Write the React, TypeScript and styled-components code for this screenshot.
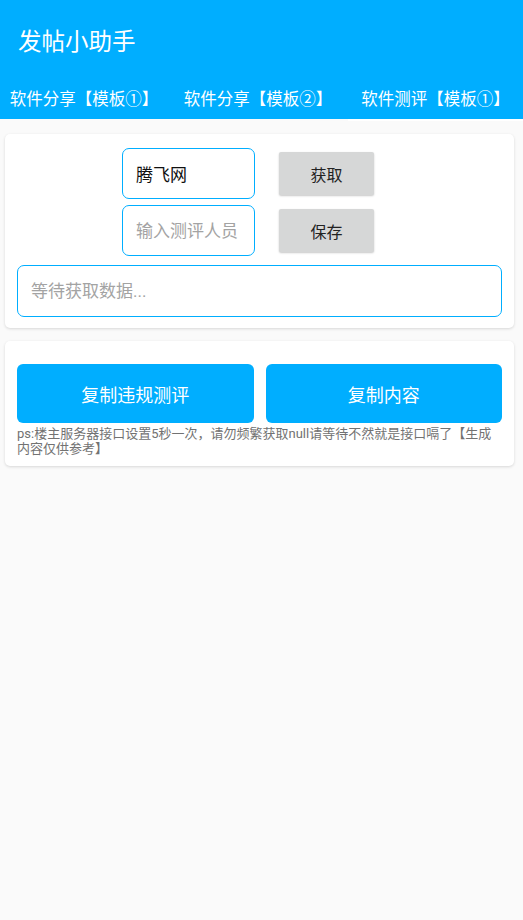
import React, { useState } from "react";
import styled, { createGlobalStyle } from "styled-components";

const BLUE = "#00aeff";

const GlobalStyle = createGlobalStyle`
  html, body {
    margin: 0;
    padding: 0;
    background: #fafafa;
  }
  body {
    font-family: Roboto, "Noto Sans CJK SC", "Noto Sans", sans-serif;
    color: #212121;
  }
  * {
    box-sizing: border-box;
  }
`;

const Page = styled.div`
  min-height: 920px;
  background: #fafafa;
`;

const TitleBar = styled.header`
  height: 79px;
  background: ${BLUE};
  display: flex;
  align-items: center;
  padding-left: 18px;
  color: #ffffff;
  font-size: 23.5px;
`;

const TabBar = styled.nav`
  display: flex;
`;

const Tab = styled.div<{ $width: number }>`
  width: ${(p) => p.$width}px;
  flex: none;
  display: flex;
  flex-direction: column;
`;

const TabLabel = styled.div`
  height: 40px;
  padding-bottom: 3px;
  background: ${BLUE};
  color: #ffffff;
  font-size: 16.5px;
  display: flex;
  align-items: center;
  justify-content: center;
  white-space: nowrap;
`;

const Indicator = styled.div<{ $active: boolean }>`
  height: 2px;
  background: ${(p) => (p.$active ? "#ffffff" : "transparent")};
`;

const Content = styled.main`
  padding: 13px 9px 0 5px;
  display: flex;
  flex-direction: column;
  gap: 13px;
`;

const Card = styled.section<{ $top: number; $bottom: number }>`
  background: #ffffff;
  border-radius: 5px;
  box-shadow: 0 1px 3px rgba(0, 0, 0, 0.14);
  padding: ${(p) => p.$top}px 12px ${(p) => p.$bottom}px 12px;
  display: flex;
  flex-direction: column;
`;

const FormRow = styled.div`
  display: flex;
  align-items: center;
  gap: 24px;
  padding-left: 105px;
  margin-bottom: 6px;
`;

const Field = styled.input<{ $width?: number }>`
  width: ${(p) => (p.$width ? `${p.$width}px` : "100%")};
  height: 51px;
  border: 1px solid ${BLUE};
  border-radius: 7px;
  background: #ffffff;
  padding: 0 12px 0 13px;
  font-family: inherit;
  font-size: 17px;
  color: #111111;
  outline: none;
  &::placeholder {
    color: #a3a3a3;
  }
`;

const WideField = styled(Field)`
  height: 52px;
  margin-top: 3px;
`;

const GrayButton = styled.button`
  width: 95px;
  height: 43px;
  border: none;
  border-radius: 2px;
  background: #d6d7d7;
  box-shadow: 0 1px 2px rgba(0, 0, 0, 0.22);
  font-family: inherit;
  font-size: 16px;
  color: #222222;
  cursor: pointer;
`;

const ActionRow = styled.div`
  display: grid;
  grid-template-columns: 1fr 1fr;
  gap: 12px;
`;

const BlueButton = styled.button`
  height: 59px;
  border: none;
  border-radius: 6px;
  background: ${BLUE};
  color: #ffffff;
  font-family: inherit;
  font-size: 18px;
  cursor: pointer;
`;

const Note = styled.p`
  margin: 3px 0 0;
  font-size: 13px;
  line-height: 15px;
  color: #727272;
`;

const tabs = [
  { label: "软件分享【模板①】", width: 168 },
  { label: "软件分享【模板②】", width: 180 },
  { label: "软件测评【模板①】", width: 175 },
];

export default function App() {
  const [active, setActive] = useState(2);
  const [site, setSite] = useState("腾飞网");
  const [reviewer, setReviewer] = useState("");

  return (
    <>
      <GlobalStyle />
      <Page>
        <TitleBar>发帖小助手</TitleBar>
        <TabBar>
          {tabs.map((tab, index) => (
            <Tab key={tab.label} $width={tab.width} onClick={() => setActive(index)}>
              <TabLabel>{tab.label}</TabLabel>
              <Indicator $active={index === active} />
            </Tab>
          ))}
        </TabBar>
        <Content>
          <Card $top={14} $bottom={11}>
            <FormRow>
              <Field $width={133} value={site} onChange={(e) => setSite(e.target.value)} />
              <GrayButton type="button">获取</GrayButton>
            </FormRow>
            <FormRow>
              <Field
                $width={133}
                placeholder="输入测评人员"
                value={reviewer}
                onChange={(e) => setReviewer(e.target.value)}
              />
              <GrayButton type="button">保存</GrayButton>
            </FormRow>
            <WideField placeholder="等待获取数据..." readOnly />
          </Card>
          <Card $top={23} $bottom={10}>
            <ActionRow>
              <BlueButton type="button">复制违规测评</BlueButton>
              <BlueButton type="button">复制内容</BlueButton>
            </ActionRow>
            <Note>
              ps:楼主服务器接口设置5秒一次，请勿频繁获取null请等待不然就是接口嗝了【生成内容仅供参考】
            </Note>
          </Card>
        </Content>
      </Page>
    </>
  );
}
